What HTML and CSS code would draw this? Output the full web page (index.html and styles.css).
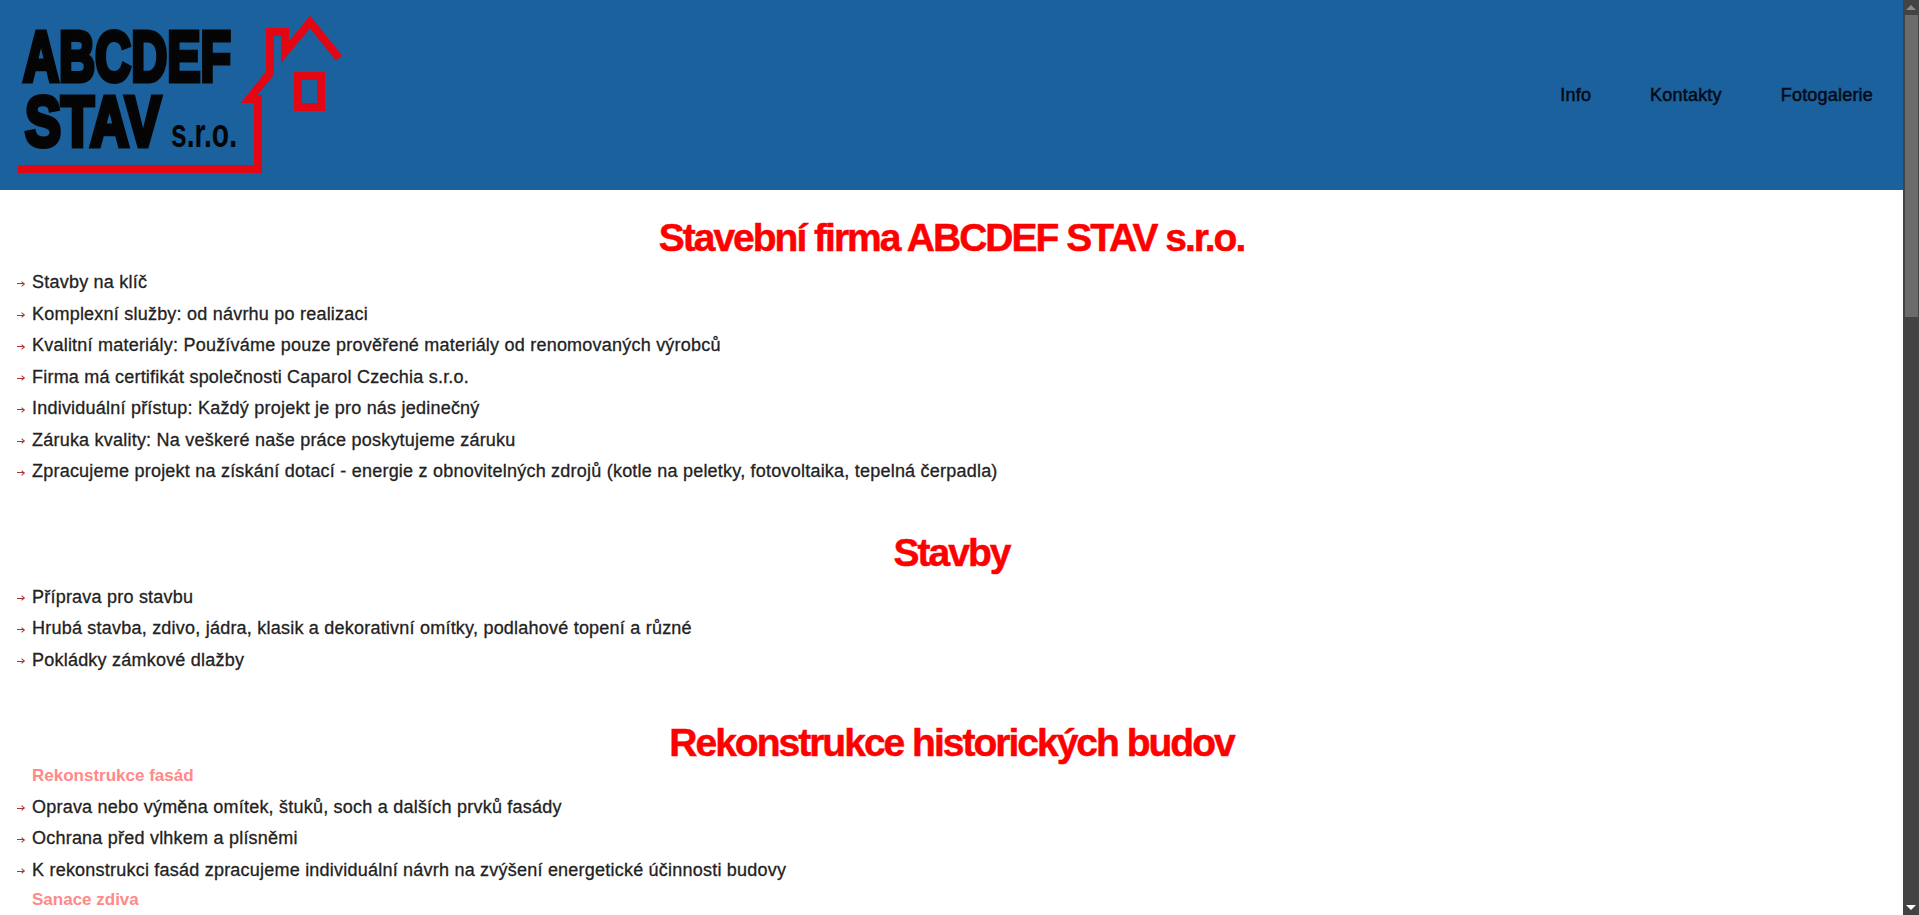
FILE: index.html
```html
<!DOCTYPE html>
<html lang="cs">

<head>
    <meta charset="UTF-8">
    <title>Stavební firma ABCDEF STAV s.r.o.</title>
    <link rel="stylesheet" href="styles.css">
</head>

<body>

    <div class="page">
        <header class="top">
            <svg class="logo" width="345" height="190" viewBox="0 0 345 190">
                <text class="logo-big" x="23" y="81" textLength="208" lengthAdjust="spacingAndGlyphs">ABCDEF</text>
                <text class="logo-big" x="25" y="146" textLength="136" lengthAdjust="spacingAndGlyphs">STAV</text>
                <text class="logo-small" x="171" y="147" textLength="66" lengthAdjust="spacingAndGlyphs">s.r.o.</text>
                <path class="logo-line" d="M18 169H258V99H249L270 73V32H285V52L310 22L339 58" />
                <path class="logo-window" d="M298 76H321V107H298Z" />
            </svg>
            <nav class="menu">
                <a href="#">Info</a>
                <a href="#">Kontakty</a>
                <a href="#">Fotogalerie</a>
            </nav>
        </header>

        <main class="content">
            <h1>Stavební firma ABCDEF STAV s.r.o.</h1>
            <ul>
                <li>Stavby na klíč</li>
                <li>Komplexní služby: od návrhu po realizaci</li>
                <li>Kvalitní materiály: Používáme pouze prověřené materiály od renomovaných výrobců</li>
                <li>Firma má certifikát společnosti Caparol Czechia s.r.o.</li>
                <li>Individuální přístup: Každý projekt je pro nás jedinečný</li>
                <li>Záruka kvality: Na veškeré naše práce poskytujeme záruku</li>
                <li>Zpracujeme projekt na získání dotací - energie z obnovitelných zdrojů (kotle na peletky, fotovoltaika, tepelná čerpadla)</li>
            </ul>

            <h1>Stavby</h1>
            <ul class="before-history">
                <li>Příprava pro stavbu</li>
                <li>Hrubá stavba, zdivo, jádra, klasik a dekorativní omítky, podlahové topení a různé</li>
                <li>Pokládky zámkové dlažby</li>
            </ul>

            <h1>Rekonstrukce historických budov</h1>
            <h2>Rekonstrukce fasád</h2>
            <ul>
                <li>Oprava nebo výměna omítek, štuků, soch a dalších prvků fasády</li>
                <li>Ochrana před vlhkem a plísněmi</li>
                <li>K rekonstrukci fasád zpracujeme individuální návrh na zvýšení energetické účinnosti budovy</li>
            </ul>
            <h2>Sanace zdiva</h2>
        </main>
    </div>

    <div class="scrollbar">
        <span class="arrow-up"></span>
        <div class="thumb"></div>
        <span class="arrow-down"></span>
    </div>

</body>

</html>
```

FILE: styles.css
```css
html,
body {
    height: 100%;
    margin: 0;
    overflow: hidden;
}

body {
    display: flex;
    font-family: "Liberation Sans", Arial, sans-serif;
    background-color: white;
    color: #222;
}

.page {
    flex: 1;
    min-width: 0;
    height: 100%;
    overflow: hidden;
}

.top {
    height: 190px;
    background-color: #1a619d;
    display: flex;
    justify-content: space-between;
    align-items: center;
}

.logo {
    display: block;
    flex: none;
}

.logo-big {
    font-family: "Liberation Sans", Arial, sans-serif;
    font-size: 71px;
    font-weight: bold;
    fill: #050505;
    stroke: #050505;
    stroke-width: 5px;
}

.logo-small {
    font-family: "Liberation Sans", Arial, sans-serif;
    font-size: 40px;
    font-weight: bold;
    fill: #050505;
}

.logo-line,
.logo-window {
    fill: none;
    stroke: #e30613;
    stroke-width: 8px;
}

.menu {
    display: flex;
    gap: 59px;
    padding-right: 30px;
}

.menu a {
    color: #050a14;
    text-decoration: none;
    font-size: 18px;
    letter-spacing: 0.2px;
    -webkit-text-stroke: 0.5px #050a14;
}

.content h1 {
    margin: 0;
    padding-bottom: 5px;
    text-align: center;
    color: red;
    font-size: 39px;
    line-height: 48px;
    font-weight: bold;
    letter-spacing: -2px;
    -webkit-text-stroke: 0.5px red;
}

.content h1:first-child {
    margin-top: 24px;
}

.content h2 {
    margin: 0 0 0 32px;
    color: #f88;
    font-size: 17px;
    line-height: 32px;
    font-weight: bold;
}

.content h1 + h2 {
    margin-top: -12.500px;
}

ul {
    list-style: none;
    margin: 0 0 41px;
    padding: 0;
}

ul.before-history {
    margin-bottom: 43px;
}

h2 + ul {
    margin-bottom: -2px;
}

li {
    position: relative;
    padding-left: 32px;
    font-size: 18px;
    line-height: 31.500px;
    letter-spacing: 0.22px;
    -webkit-text-stroke: 0.3px #222;
}

/* arrow in front of each row: shaft and head */
li::before {
    content: "";
    position: absolute;
    left: 17px;
    top: 16px;
    width: 7px;
    height: 1px;
    background-color: #a33;
}

li::after {
    content: "";
    position: absolute;
    left: 20px;
    top: 14.500px;
    width: 4px;
    height: 4px;
    border-top: 1px solid #a33;
    border-right: 1px solid #a33;
    box-sizing: border-box;
    transform: rotate(45deg);
}

.scrollbar {
    flex: none;
    width: 16px;
    height: 100%;
    position: relative;
    background-color: #434343;
}

.thumb {
    position: absolute;
    top: 15px;
    left: 2px;
    right: 1px;
    height: 302px;
    background-color: #6b6b6b;
}

.arrow-up,
.arrow-down {
    position: absolute;
    left: 3px;
    border-left: 5px solid transparent;
    border-right: 5px solid transparent;
}

.arrow-up {
    top: 5px;
    border-bottom: 5px solid #8a8a8a;
}

.arrow-down {
    bottom: 5px;
    border-top: 5px solid white;
}
```
